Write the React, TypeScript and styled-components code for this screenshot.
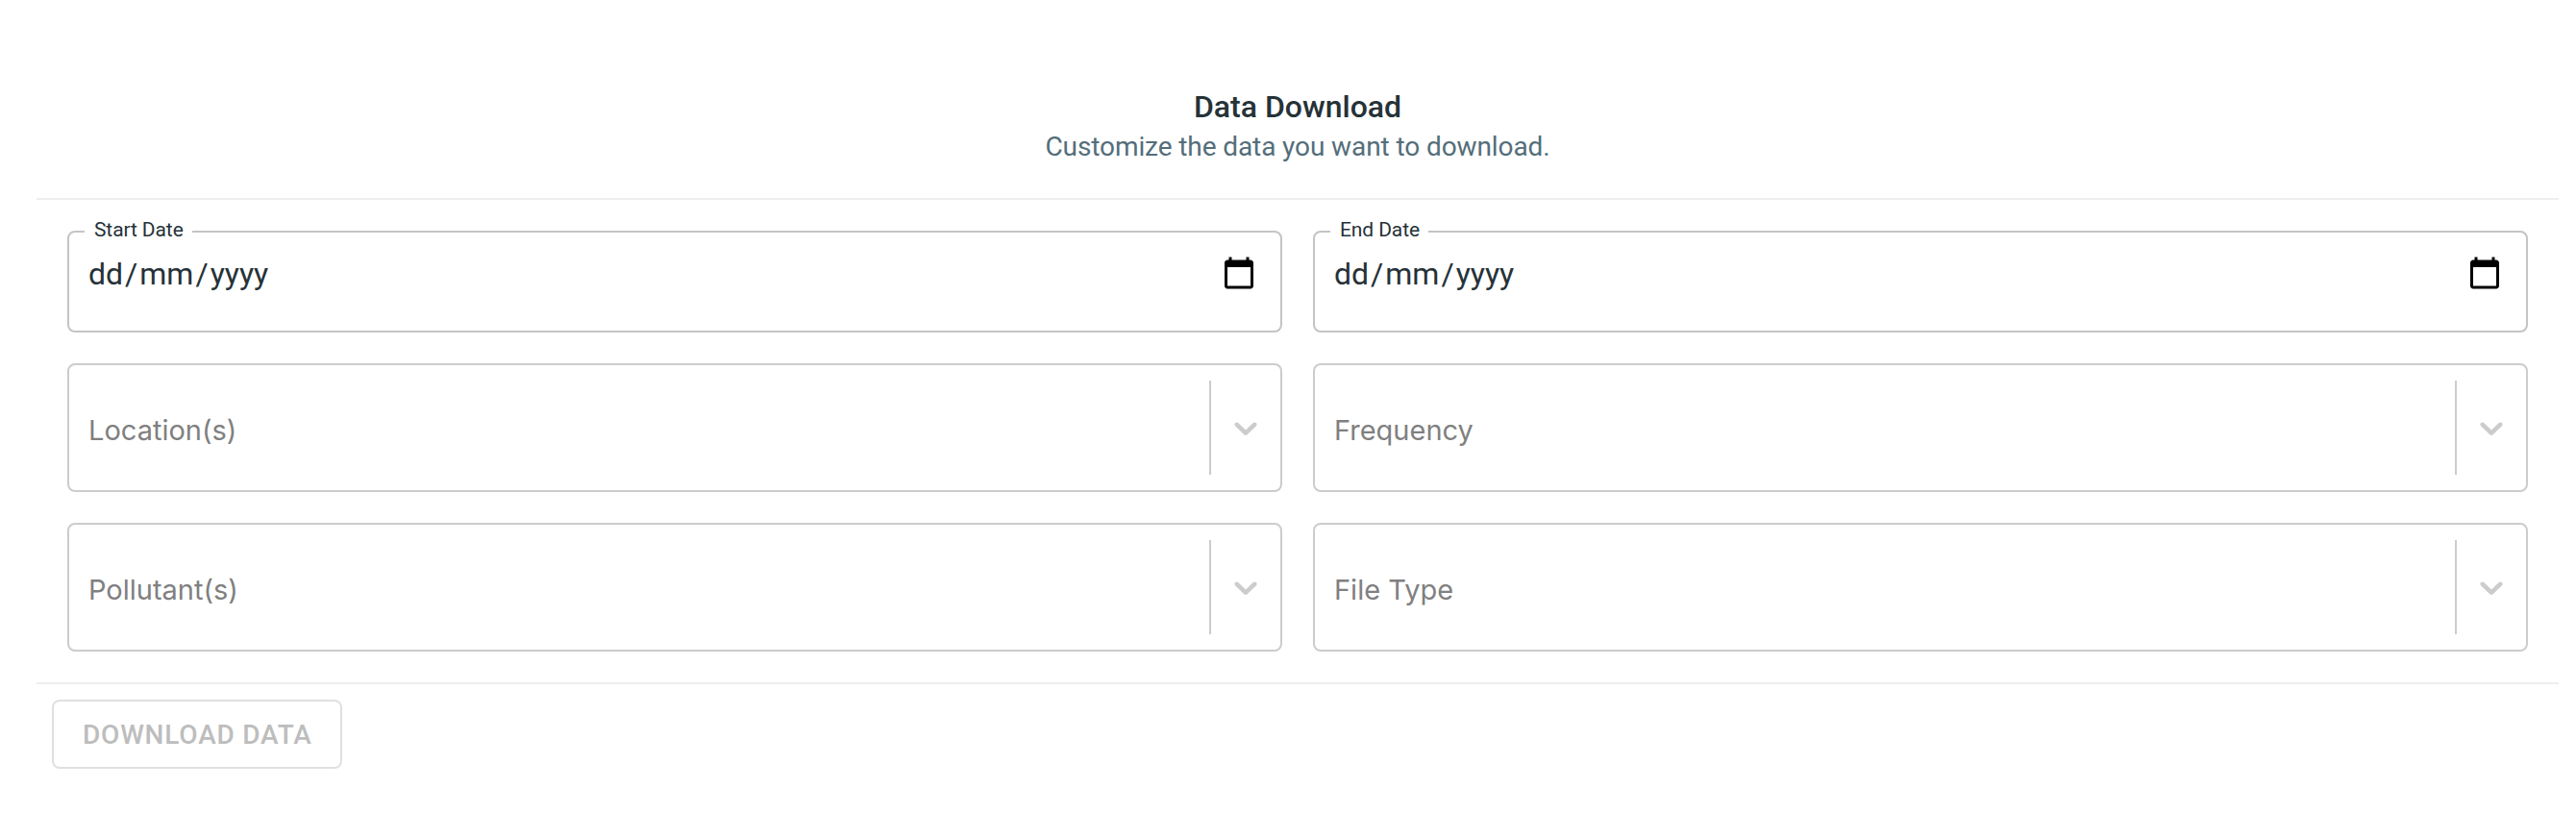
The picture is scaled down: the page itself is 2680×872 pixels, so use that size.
import React from 'react';
import styled, { createGlobalStyle } from 'styled-components';

const GlobalStyle = createGlobalStyle`
  * {
    box-sizing: border-box;
  }

  body {
    margin: 0;
    background: #fff;
    font-family: Roboto, 'Liberation Sans', sans-serif;
    color: #263238;
  }
`;

const Card = styled.main`
  margin: 60px 18px 0 38px;
  background: #fff;
`;

const CardHeader = styled.header`
  display: flex;
  flex-direction: column;
  align-items: center;
  height: 146px;
  padding: 32px 0 30px;
`;

const Title = styled.h1`
  margin: 0;
  font-size: 32px;
  font-weight: 500;
  line-height: 38px;
`;

const Subtitle = styled.p`
  margin: 0;
  font-size: 28px;
  line-height: 46px;
  letter-spacing: -0.1px;
  color: #546e7a;
`;

const Divider = styled.hr`
  height: 2px;
  margin: 0;
  border: 0;
  background: #eee;
`;

const FieldGrid = styled.form`
  display: grid;
  grid-template-columns: 1fr 1fr;
  gap: 32px;
  padding: 32px;
`;

const DateBox = styled.div`
  position: relative;
  display: flex;
  align-items: flex-start;
  justify-content: space-between;
  height: 106px;
  padding: 22px 25px 0 20px;
  border: 2px solid #c4c4c4;
  border-radius: 8px;
`;

const DateLabel = styled.label<{ $width: number }>`
  position: absolute;
  top: -16px;
  left: 16px;
  width: ${({ $width }) => $width}px;
  padding-left: 10px;
  background: #fff;
  font-size: 21px;
  line-height: 26px;
  letter-spacing: -0.1px;
  white-space: nowrap;
`;

const DateValue = styled.div`
  display: flex;
  font-size: 32px;
  line-height: 42px;
`;

const DateSlash = styled.span`
  padding: 0 2px;
`;

const CalendarSvg = styled.svg`
  width: 36px;
  height: 36px;
  margin-top: 2px;
  fill: #000;
`;

const SelectBox = styled.div`
  display: flex;
  align-items: stretch;
  height: 134px;
  border: 2px solid #ccc;
  border-radius: 8px;
  background: #fff;
`;

const Placeholder = styled.div`
  flex: 1;
  display: flex;
  align-items: center;
  padding: 6px 0 0 20px;
  font-family: Inter, sans-serif;
  font-size: 29px;
  line-height: 36px;
  color: #808080;
`;

const Separator = styled.span`
  width: 2px;
  margin: 16px 0;
  background: #ccc;
`;

const Indicator = styled.div`
  display: flex;
  align-items: center;
  padding: 0 16px;
`;

const ChevronSvg = styled.svg`
  width: 40px;
  height: 40px;
  fill: #ccc;
`;

const CardActions = styled.footer`
  display: flex;
  padding: 16px;
`;

const DownloadButton = styled.button`
  width: 302px;
  height: 72px;
  padding: 1px 30px 0;
  border: 2px solid #e0e0e0;
  border-radius: 8px;
  background: transparent;
  font-family: Roboto, 'Liberation Sans', sans-serif;
  font-size: 28px;
  font-weight: 500;
  line-height: 49px;
  letter-spacing: 0.8px;
  text-transform: uppercase;
  text-align: left;
  white-space: nowrap;
  color: #bdbdbd;
`;

function DateField({ label, labelWidth }: { label: string; labelWidth: number }) {
  return (
    <DateBox>
      <DateLabel $width={labelWidth}>{label}</DateLabel>
      <DateValue>
        <span>dd</span>
        <DateSlash>/</DateSlash>
        <span>mm</span>
        <DateSlash>/</DateSlash>
        <span>yyyy</span>
      </DateValue>
      <CalendarSvg viewBox="0 0 24 24" aria-hidden="true">
        <path d="M20 3h-1V1h-2v2H7V1H5v2H4c-1.1 0-2 .9-2 2v16c0 1.1.9 2 2 2h16c1.1 0 2-.9 2-2V5c0-1.1-.9-2-2-2zm0 18H4V8h16v13z" />
      </CalendarSvg>
    </DateBox>
  );
}

function SelectField({ placeholder }: { placeholder: string }) {
  return (
    <SelectBox>
      <Placeholder>{placeholder}</Placeholder>
      <Separator />
      <Indicator>
        <ChevronSvg viewBox="0 0 20 20" aria-hidden="true">
          <path d="M4.516 7.548c0.436-0.446 1.043-0.481 1.576 0l3.908 3.747 3.908-3.747c0.533-0.481 1.141-0.446 1.574 0 0.436 0.445 0.408 1.197 0 1.615-0.406 0.418-4.695 4.502-4.695 4.502-0.217 0.223-0.502 0.335-0.787 0.335s-0.57-0.112-0.789-0.335c0 0-4.287-4.084-4.695-4.502s-0.436-1.17 0-1.615z" />
        </ChevronSvg>
      </Indicator>
    </SelectBox>
  );
}

export default function App() {
  return (
    <>
      <GlobalStyle />
      <Card>
        <CardHeader>
          <Title>Data Download</Title>
          <Subtitle>Customize the data you want to download.</Subtitle>
        </CardHeader>
        <Divider />
        <FieldGrid>
          <DateField label="Start Date" labelWidth={112} />
          <DateField label="End Date" labelWidth={102} />
          <SelectField placeholder="Location(s)" />
          <SelectField placeholder="Frequency" />
          <SelectField placeholder="Pollutant(s)" />
          <SelectField placeholder="File Type" />
        </FieldGrid>
        <Divider />
        <CardActions>
          <DownloadButton disabled>Download Data</DownloadButton>
        </CardActions>
      </Card>
    </>
  );
}
